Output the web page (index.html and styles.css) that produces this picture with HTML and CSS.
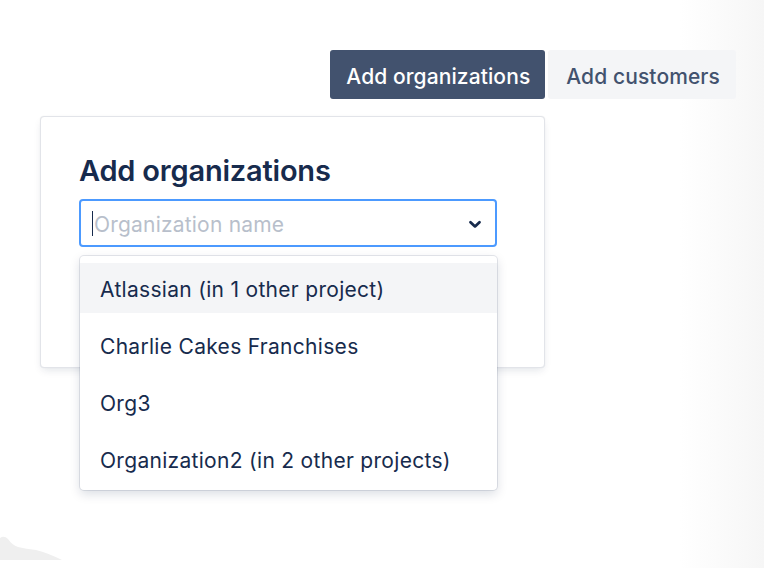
FILE: index.html
```html
<!DOCTYPE html>
<html lang="en">
<head>
<meta charset="utf-8">
<title>Add organizations</title>
<link rel="stylesheet" href="styles.css">
</head>
<body>
<svg class="blob" width="70" height="30" viewBox="0 0 70 30" aria-hidden="true">
  <path d="M0 2 Q4 -1 8 3 Q12 9 18 11 Q26 13 36 14 Q48 17 62 24 L62 24 L0 24 Z" fill="#efefef"/>
</svg>
<div class="page">
  <div class="toolbar">
    <button class="btn btn-primary">Add organizations</button>
    <button class="btn btn-subtle">Add customers</button>
  </div>
  <div class="card">
    <h2 class="card-title">Add organizations</h2>
    <div class="select">
      <div class="control">
        <span class="caret"></span>
        <span class="placeholder">Organization name</span>
        <svg class="chevron" width="24" height="24" viewBox="0 0 24 24" aria-hidden="true">
          <path d="M7.5 10.2 L12 14.4 L16.5 10.2" fill="none" stroke="#172b4d" stroke-width="2.8" stroke-linecap="round" stroke-linejoin="round"/>
        </svg>
      </div>
      <ul class="menu">
        <li class="option is-focused">Atlassian (in 1 other project)</li>
        <li class="option">Charlie Cakes Franchises</li>
        <li class="option">Org3</li>
        <li class="option">Organization2 (in 2 other projects)</li>
      </ul>
    </div>
  </div>
</div>
</body>
</html>
```
FILE: styles.css
```css
* { box-sizing: border-box; }

html, body {
  margin: 0;
  height: 100%;
}

body {
  font-family: Inter, "Noto Sans", "Liberation Sans", sans-serif;
  color: #172b4d;
  background: linear-gradient(to right, #ffffff 0, #ffffff 680px, #f6f6f6 764px);
  position: relative;
  overflow: hidden;
}

.blob {
  position: absolute;
  left: 0;
  top: 536px;
}

.page {
  padding: 50px 28px 0 40px;
}

.toolbar {
  display: flex;
  justify-content: flex-end;
  gap: 3px;
}

.btn {
  font-family: inherit;
  font-size: 21px;
  font-weight: 500;
  height: 49px;
  border: none;
  border-radius: 3px;
  line-height: 45px;
  padding-top: 4px;
}

.btn-primary {
  background: #42526e;
  color: #ffffff;
  padding-left: 16px;
  padding-right: 15px;
  letter-spacing: 0.1px;
}

.btn-subtle {
  background: #f4f5f7;
  color: #42526e;
  padding-left: 18px;
  padding-right: 16px;
  letter-spacing: 0.1px;
}

.card {
  margin-top: 17px;
  width: 505px;
  height: 252px;
  border: 1px solid #e2e4e9;
  border-radius: 4px;
  background: #ffffff;
  box-shadow: 0 4px 8px -2px rgba(9, 30, 66, 0.12), 0 0 1px rgba(9, 30, 66, 0.1);
  padding: 36px 47px 0 38px;
}

.card-title {
  margin: 0 0 10px;
  font-size: 29px;
  font-weight: 600;
  line-height: 36px;
  letter-spacing: -0.2px;
  color: #172b4d;
}

.select {
  position: relative;
}

.control {
  height: 48px;
  border: 2px solid #4c9aff;
  border-radius: 4px;
  display: flex;
  align-items: center;
  padding: 2px 8px 0 11px;
  background: #fff;
}

.caret {
  width: 1px;
  height: 25px;
  background: #172b4d;
  margin-right: 1px;
  margin-top: -2px;
}

.placeholder {
  flex: 1;
  font-size: 21px;
  letter-spacing: 0.2px;
  color: #b8bfcb;
}

.chevron {
  display: block;
  margin-top: -1px;
}

.menu {
  position: absolute;
  left: 1px;
  top: 57px;
  width: 417px;
  margin: 0;
  list-style: none;
  padding: 7px 0 6px;
  background: #fff;
  border-radius: 4px;
  box-shadow: 0 4px 11px rgba(9, 30, 66, 0.15), 0 0 0 1px rgba(9, 30, 66, 0.1);
  display: flex;
  flex-direction: column;
  gap: 7px;
}

.option {
  height: 50px;
  display: flex;
  align-items: center;
  padding: 2px 20px 0;
  font-size: 21px;
  letter-spacing: 0.3px;
  color: #172b4d;
}

.option.is-focused {
  background: #f4f5f7;
}
```
